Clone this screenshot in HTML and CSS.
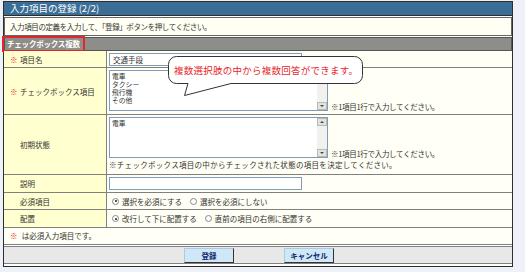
FILE: index.html
```html
<!DOCTYPE html>
<html lang="ja">
<head>
    <meta charset="UTF-8">
    <title>入力項目の登録</title>
    <link rel="stylesheet" href="styles.css">
</head>
<body>

    <div class="frame">
        <div class="title">入力項目の登録 (2/2)</div>
        <div class="intro">入力項目の定義を入力して、「登録」ボタンを押してください。</div>
        <div class="section"><span class="section-name">チェックボックス複数</span></div>

        <div class="form">
            <div class="label row-name"><span class="req">※</span>項目名</div>
            <div class="value row-name">
                <div class="field">交通手段</div>
            </div>

            <div class="label row-items"><span class="req">※</span>チェックボックス項目</div>
            <div class="value row-items">
                <div class="area-line">
                    <div class="area">
                        <div class="area-text">
                            <div>電車</div>
                            <div>タクシー</div>
                            <div>飛行機</div>
                            <div>その他</div>
                        </div>
                        <div class="scroll"><span class="arrow up"></span><span class="arrow down"></span></div>
                    </div>
                    <span class="hint">※1項目1行で入力してください。</span>
                </div>
            </div>

            <div class="label row-init">初期状態</div>
            <div class="value row-init">
                <div class="area-line">
                    <div class="area">
                        <div class="area-text">
                            <div>電車</div>
                        </div>
                        <div class="scroll"><span class="arrow up"></span><span class="arrow down"></span></div>
                    </div>
                    <span class="hint">※1項目1行で入力してください。</span>
                </div>
                <div class="hint long">※チェックボックス項目の中からチェックされた状態の項目を決定してください。</div>
            </div>

            <div class="label row-desc">説明</div>
            <div class="value row-desc">
                <div class="field"></div>
            </div>

            <div class="label row-radio">必須項目</div>
            <div class="value row-radio">
                <label class="option"><span class="radio checked"></span>選択を必須にする</label>
                <label class="option"><span class="radio"></span>選択を必須にしない</label>
            </div>

            <div class="label row-place">配置</div>
            <div class="value row-place">
                <label class="option"><span class="radio checked"></span>改行して下に配置する</label>
                <label class="option"><span class="radio"></span>直前の項目の右側に配置する</label>
            </div>
        </div>

        <div class="footnote"><span class="req">※</span> は必須入力項目です。</div>

        <div class="actions">
            <button class="btn">登録</button>
            <button class="btn">キャンセル</button>
        </div>

        <svg class="bubble" width="200" height="45" viewBox="0 0 200 45">
            <path d="M 10.5 2.5 H 188.5 A 8 8 0 0 1 196.5 10.5 V 21.5 A 8 8 0 0 1 188.5 29.5 H 65 L 18.5 41.5 L 22 29.5 H 10.5 A 8 8 0 0 1 2.5 21.5 V 10.5 A 8 8 0 0 1 10.5 2.5 Z" fill="#fff" stroke="#333" stroke-width="1"/>
            <text x="8" y="19.5" textLength="184" class="bubble-text">複数選択肢の中から複数回答ができます。</text>
        </svg>
    </div>

</body>
</html>
```

FILE: styles.css
```css
body {
    margin: 0;
    background: #eef1f7;
    font-family: "Noto Sans CJK JP", "Noto Sans", sans-serif;
    font-size: 7.5px;
    color: #333;
}
.frame {
    position: relative;
    width: 508px;
    margin: 1px 0 0 3px;
    padding-bottom: 2px;
    border: 1px solid #2e2e2e;
    background: #fff;
}
.title {
    height: 13px;
    line-height: 13px;
    padding-left: 6px;
    background: #3a6e97;
    color: #fff;
    font-size: 9.5px;
    border-bottom: 1px solid #2e2e2e;
}
.intro {
    margin-top: 1px;
    height: 17px;
    line-height: 17px;
    padding-left: 5px;
    border: 1px solid #666;
    background: #fffff4;
    letter-spacing: -0.4px;
}
.section {
    display: flex;
    margin-top: 1px;
    height: 12px;
    border: 1px solid #555;
    background: #8d8d89;
}
.section-name {
    margin: -2px 0 -2px -3px;
    padding: 0 3px 0 3px;
    height: 12px;
    line-height: 12px;
    border: 2px solid #e3262b;
    color: #fff;
    font-weight: bold;
    letter-spacing: -0.2px;
}
.form {
    display: grid;
    grid-template-columns: 103px 1fr;
}
.label, .value {
    box-sizing: border-box;
    display: flex;
    align-items: center;
    border-bottom: 1px solid #808080;
}
.label {
    padding-left: 16px;
    background: #ffffcf;
    border-right: 1px solid #808080;
}
.value {
    padding-left: 2px;
    background: #fffff5;
}
.req {
    display: inline-block;
    width: 10px;
    margin-left: -10px;
    color: #e3262b;
}
.row-name { height: 17px; }
.row-items { height: 47px; }
.row-init { height: 60px; }
.row-desc { height: 18px; }
.row-radio { height: 17px; }
.row-place { height: 18px; }
.row-items.value, .row-init.value {
    flex-direction: column;
    align-items: flex-start;
    justify-content: flex-start;
    padding-top: 2px;
}
.field {
    box-sizing: border-box;
    width: 193px;
    height: 13px;
    line-height: 11px;
    padding-left: 3px;
    border: 1px solid #7f9db9;
    background: #fff;
}
.area-line {
    display: flex;
    align-items: flex-end;
    gap: 3px;
}
.area {
    box-sizing: border-box;
    display: flex;
    width: 219px;
    height: 41px;
    border: 1px solid #7f9db9;
    background: #fff;
}
.area-text {
    flex: 1;
    padding: 1px 0 0 2px;
    font-size: 6.8px;
    line-height: 8px;
}
.scroll {
    display: flex;
    flex-direction: column;
    justify-content: space-between;
    width: 10px;
    background: #f1f1ed;
}
.arrow {
    position: relative;
    box-sizing: border-box;
    height: 8px;
    background: #e2e2de;
    border: 1px solid #b9b9b5;
}
.arrow::after {
    content: "";
    position: absolute;
    left: 2px;
    border-left: 2px solid transparent;
    border-right: 2px solid transparent;
}
.arrow.up::after {
    top: 2px;
    border-bottom: 2px solid #444;
}
.arrow.down::after {
    top: 2px;
    border-top: 2px solid #444;
}
.hint {
    line-height: 9px;
    letter-spacing: -0.3px;
}
.hint.long {
    margin-top: 2px;
    letter-spacing: 0.3px;
}
.row-radio.value, .row-place.value {
    gap: 8px;
    padding-left: 5px;
}
.option {
    display: flex;
    align-items: center;
    white-space: nowrap;
}
.radio {
    position: relative;
    box-sizing: border-box;
    width: 7px;
    height: 7px;
    margin-right: 3px;
    border: 1px solid #888;
    border-radius: 50%;
    background: #fff;
}
.radio.checked::after {
    content: "";
    position: absolute;
    left: 1.5px;
    top: 1.5px;
    width: 2px;
    height: 2px;
    border-radius: 50%;
    background: #222;
}
.footnote {
    height: 16px;
    line-height: 16px;
    padding-left: 16px;
    background: #fffff5;
    border-bottom: 1px solid #808080;
}
.actions {
    display: flex;
    justify-content: center;
    align-items: center;
    gap: 50px;
    margin-top: 1px;
    height: 16px;
    padding-left: 2px;
    background: #e8e8e8;
    border-top: 1px solid #808080;
    border-bottom: 1px solid #808080;
}
.btn {
    box-sizing: border-box;
    width: 50px;
    height: 15px;
    padding: 0;
    font-family: inherit;
    font-size: 7.5px;
    font-weight: bold;
    color: #13266b;
    background: #cfe7f7;
    border: 1px solid;
    border-color: #a8cbe6 #333 #333 #a8cbe6;
}
.bubble {
    position: absolute;
    left: 162px;
    top: 52px;
}
.bubble-text {
    font-size: 9.5px;
    fill: #e8262b;
}
```
